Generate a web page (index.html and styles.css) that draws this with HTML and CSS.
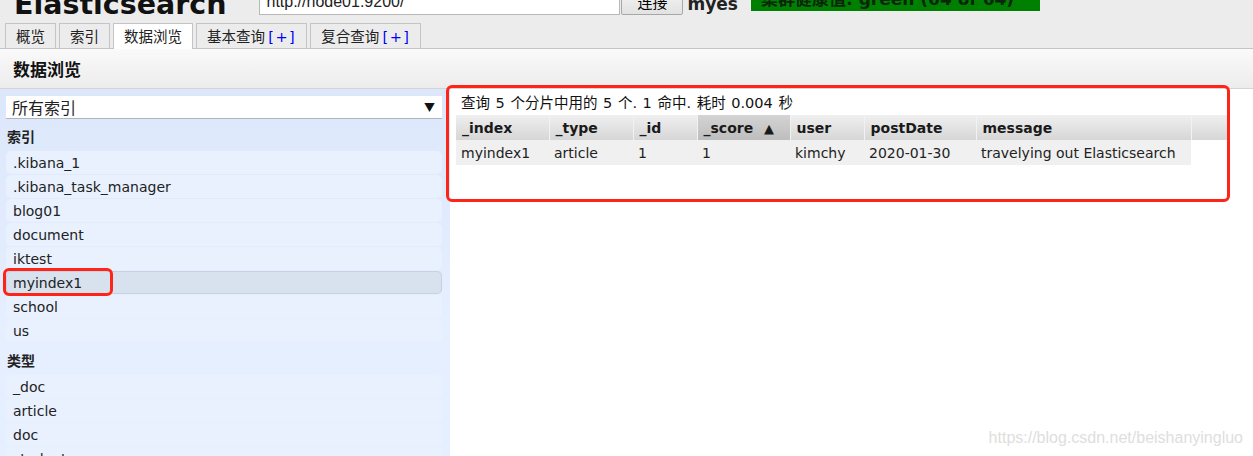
FILE: index.html
```html
<!DOCTYPE html>
<html lang="zh-CN">
<head>
    <meta charset="UTF-8">
    <title>Elasticsearch Head</title>
    <link rel="stylesheet" href="styles.css">
</head>
<body>
    <div class="header">
        <h1 class="logo">Elasticsearch</h1>
        <input class="cluster-url" type="text" value="http://node01:9200/">
        <button class="connect">连接</button>
        <span class="cluster-name">myes</span>
        <span class="health">集群健康值: green (64 of 64)</span>
    </div>

    <div class="tabs">
        <div class="tab small">概览</div>
        <div class="tab small">索引</div>
        <div class="tab active">数据浏览</div>
        <div class="tab">基本查询 <span class="plus">[+]</span></div>
        <div class="tab">复合查询 <span class="plus">[+]</span></div>
    </div>

    <div class="page-title">数据浏览</div>

    <div class="browser">
        <div class="sidebar">
            <div class="select-box">
                <span>所有索引</span>
                <span class="arrow">▼</span>
            </div>

            <div class="group-title">索引</div>
            <div class="item">.kibana_1</div>
            <div class="item">.kibana_task_manager</div>
            <div class="item">blog01</div>
            <div class="item">document</div>
            <div class="item">iktest</div>
            <div class="item selected">myindex1</div>
            <div class="item">school</div>
            <div class="item">us</div>

            <div class="group-title">类型</div>
            <div class="item">_doc</div>
            <div class="item">article</div>
            <div class="item">doc</div>
            <div class="item">student</div>

            <div class="mark mark-index"></div>
        </div>

        <div class="results">
            <div class="summary">查询 5 个分片中用的 5 个. 1 命中. 耗时 0.004 秒</div>
            <table class="hits">
                <thead>
                    <tr>
                        <th class="c-index">_index</th>
                        <th class="c-type">_type</th>
                        <th class="c-id">_id</th>
                        <th class="c-score sorted">_score <span class="sort">▲</span></th>
                        <th class="c-user">user</th>
                        <th class="c-date">postDate</th>
                        <th class="c-msg">message</th>
                        <th class="c-extra"></th>
                    </tr>
                </thead>
                <tbody>
                    <tr>
                        <td>myindex1</td>
                        <td>article</td>
                        <td>1</td>
                        <td>1</td>
                        <td>kimchy</td>
                        <td>2020-01-30</td>
                        <td>travelying out Elasticsearch</td>
                        <td class="empty"></td>
                    </tr>
                </tbody>
            </table>
            <div class="mark mark-results"></div>
        </div>
    </div>

    <div class="watermark">https://blog.csdn.net/beishanyingluo</div>
</body>
</html>
```

FILE: styles.css
```css
body {
    margin: 0;
    height: 456px;
    overflow: hidden;
    font-family: "DejaVu Sans", "Noto Sans CJK SC", sans-serif;
    font-size: 14px;
    color: #222;
    background: #ececec;
    position: relative;
}

.header {
    height: 22px;
    display: flex;
    align-items: flex-end;
    overflow: hidden;
}

.logo {
    margin: 0 0 2px 14px;
    font-size: 28.5px;
    font-weight: bold;
    line-height: 30px;
    color: #111;
}

.cluster-url {
    box-sizing: border-box;
    width: 361px;
    height: 26px;
    margin: 0 0 7px 33px;
    border: 1px solid #b8b8b8;
    padding: 0 6px;
    font-family: "Liberation Sans", sans-serif;
    font-size: 16px;
    color: #222;
}

.connect {
    width: 62px;
    height: 28px;
    margin: 0 0 7px 1px;
    border: 1px solid #a8a8a8;
    border-radius: 2px;
    background: linear-gradient(#f6f6f6, #e2e2e2);
    font-family: "Noto Sans CJK SC", sans-serif;
    font-size: 15px;
    padding: 0;
}

.cluster-name {
    margin: 0 0 8px 4px;
    font-size: 17px;
    font-weight: bold;
}

.health {
    display: inline-block;
    width: 289px;
    margin: 0 0 11px 13px;
    background: #008000;
    color: #0c260c;
    font-size: 17px;
    font-weight: bold;
    padding-left: 10px;
    box-sizing: border-box;
    line-height: 24px;
}

/* tabs */
.tabs {
    display: flex;
    gap: 3px;
    padding: 1px 0 0 5px;
    height: 25px;
    border-bottom: 1px solid #c4c4c4;
}

.tab {
    border: 1px solid #c4c4c4;
    border-bottom: none;
    padding: 0 10px;
    line-height: 24px;
    font-family: "Noto Sans CJK SC", sans-serif;
    font-size: 14.5px;
    color: #222;
    background: #ececec;
}

.tab.small {
    width: 51px;
    box-sizing: border-box;
    padding: 0;
    text-align: center;
}

.tab.active {
    width: 80px;
    box-sizing: border-box;
    padding: 0;
    text-align: center;
    background: #fff;
    height: 26px;
}

.plus {
    color: #0000ff;
    font-family: "DejaVu Sans", sans-serif;
    letter-spacing: 1.5px;
}

.page-title {
    height: 39px;
    line-height: 40px;
    padding-left: 13px;
    font-family: "Noto Sans CJK SC", sans-serif;
    font-size: 17px;
    font-weight: bold;
    color: #111;
    background: linear-gradient(#fafafa, #ececec);
    border-bottom: 1px solid #d4d4d4;
}

/* data browser */
.browser {
    display: flex;
    height: 400px;
    background: #fff;
}

.sidebar {
    width: 450px;
    box-sizing: border-box;
    padding: 7px 8px 0 6px;
    background: linear-gradient(#dce7fb, #e6efff 60%);
    position: relative;
}

.select-box {
    display: flex;
    justify-content: space-between;
    align-items: center;
    height: 22px;
    background: #fff;
    border-bottom: 1px solid #b0b4bc;
    padding: 0 7px 0 6px;
    font-family: "Noto Sans CJK SC", sans-serif;
    font-size: 16px;
    color: #222;
}

.arrow {
    font-size: 11px;
    color: #111;
}

.group-title {
    height: 30px;
    line-height: 34px;
    padding-left: 1px;
    font-family: "Noto Sans CJK SC", sans-serif;
    font-weight: bold;
    font-size: 14px;
    margin-bottom: 2px;
}

.item {
    height: 23px;
    line-height: 24px;
    margin-bottom: 1px;
    padding-left: 7px;
    border-radius: 5px;
    background: #e9f1ff;
    color: #222;
}

.item.selected {
    background: #d8e1ee;
    box-shadow: inset 0 0 0 1px #c6d2e4;
}

.results {
    flex: 1;
    padding: 6px 0 0 6px;
    position: relative;
}

.summary {
    padding-left: 5px;
    height: 20px;
    line-height: 16px;
    font-size: 14.5px;
    word-spacing: 1px;
    color: #111;
}

.hits {
    border-collapse: collapse;
    table-layout: fixed;
    width: 773px;
    font-size: 14px;
}

.hits th {
    box-sizing: border-box;
    height: 25px;
    padding: 0 6px;
    text-align: left;
    font-weight: bold;
    color: #1a1a1a;
    background: linear-gradient(#efefef, #d6d6d6);
    border-right: 1px solid #f2f2f2;
    white-space: nowrap;
}

.hits th.sorted {
    background: linear-gradient(#d4d4d4, #bdbdbd);
}

.sort {
    font-size: 13px;
    margin-left: 6px;
}

.hits td {
    height: 24px;
    padding: 1px 5px 0;
    background: #f0f0f0;
    color: #222;
    white-space: nowrap;
}

.hits td.empty {
    background: #fff;
}

.c-index { width: 93px; }
.c-type { width: 84px; }
.c-id { width: 64px; }
.c-score { width: 93px; }
.c-user { width: 74px; }
.c-date { width: 112px; }
.c-msg { width: 215px; }
.c-extra { width: 38px; }

/* red annotation marks drawn over the screenshot */
.mark {
    position: absolute;
    border: 3px solid #ff2418;
    border-radius: 6px;
    pointer-events: none;
}

.mark-index {
    left: 3px;
    top: 179px;
    width: 104px;
    height: 22px;
}

.mark-results {
    left: -4px;
    top: -4px;
    width: 778px;
    height: 111px;
}

.watermark {
    position: absolute;
    right: 10px;
    bottom: 9px;
    font-family: "Liberation Sans", sans-serif;
    font-size: 16px;
    color: #dedede;
}
```
